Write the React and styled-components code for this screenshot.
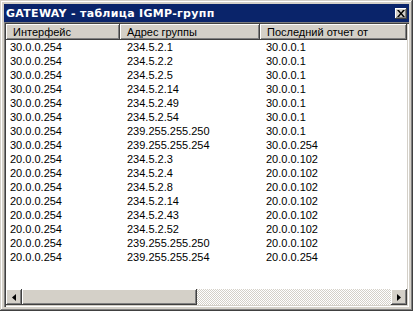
import styled, { createGlobalStyle } from "styled-components";

const GlobalStyle = createGlobalStyle`
  html, body {
    margin: 0;
    padding: 0;
    background: #d4d0c8;
  }
  * {
    box-sizing: border-box;
  }
`;

const raised = `
  box-shadow:
    inset -1px -1px #404040,
    inset 1px 1px #ffffff,
    inset -2px -2px #808080,
    inset 2px 2px #d4d0c8;
`;

const Window = styled.div`
  width: 413px;
  height: 311px;
  padding: 4px;
  background: #d4d0c8;
  display: flex;
  flex-direction: column;
  font-family: "Liberation Sans", Arial, sans-serif;
  font-size: 11px;
  box-shadow:
    inset -1px -1px #404040,
    inset 1px 1px #d4d0c8,
    inset -2px -2px #808080,
    inset 2px 2px #ffffff;
`;

const TitleBar = styled.div`
  height: 18px;
  flex-shrink: 0;
  background: #0a246a;
  color: #ffffff;
  display: flex;
  align-items: center;
  justify-content: space-between;
  padding: 0 2px 0 2px;
`;

const Title = styled.span`
  font-family: "DejaVu Sans", Verdana, sans-serif;
  font-weight: bold;
  font-size: 11px;
  letter-spacing: 0.3px;
  white-space: nowrap;
`;

const CloseButton = styled.div`
  width: 12px;
  height: 11px;
  background: #d4d0c8;
  display: flex;
  align-items: center;
  justify-content: center;
  ${raised}
`;

const Client = styled.div`
  flex: 1;
  display: flex;
  flex-direction: column;
  background: #ffffff;
  padding: 2px;
  box-shadow:
    inset 1px 1px #808080,
    inset 2px 2px #404040,
    inset -1px -1px #ffffff,
    inset -2px -2px #d4d0c8;
`;

const HeaderRow = styled.div`
  display: grid;
  grid-template-columns: 114px 140px 1fr;
  height: 16px;
  flex-shrink: 0;
`;

const HeaderCell = styled.div`
  background: #d4d0c8;
  color: #000000;
  display: flex;
  align-items: center;
  padding-left: 7px;
  white-space: nowrap;
  overflow: hidden;
  ${raised}
`;

const Body = styled.div`
  flex: 1;
  padding-top: 1px;
  overflow: hidden;
`;

const Row = styled.div`
  display: grid;
  grid-template-columns: 114px 140px 1fr;
  height: 14px;
  line-height: 13px;
  color: #000000;
`;

const Cell = styled.div`
  padding-left: ${(p) => p.$pad}px;
  white-space: nowrap;
`;

const ScrollBar = styled.div`
  height: 16px;
  flex-shrink: 0;
  display: flex;
  background: repeating-conic-gradient(#d4d0c8 0 25%, #ffffff 0 50%) 0 0 / 2px 2px;
`;

const ArrowButton = styled.div`
  width: 16px;
  height: 16px;
  background: #d4d0c8;
  display: flex;
  align-items: center;
  justify-content: center;
  ${raised}
`;

const Thumb = styled.div`
  width: 175px;
  height: 16px;
  background: #d4d0c8;
  ${raised}
`;

const Track = styled.div`
  flex: 1;
`;

const rows = [
  ["30.0.0.254", "234.5.2.1", "30.0.0.1"],
  ["30.0.0.254", "234.5.2.2", "30.0.0.1"],
  ["30.0.0.254", "234.5.2.5", "30.0.0.1"],
  ["30.0.0.254", "234.5.2.14", "30.0.0.1"],
  ["30.0.0.254", "234.5.2.49", "30.0.0.1"],
  ["30.0.0.254", "234.5.2.54", "30.0.0.1"],
  ["30.0.0.254", "239.255.255.250", "30.0.0.1"],
  ["30.0.0.254", "239.255.255.254", "30.0.0.254"],
  ["20.0.0.254", "234.5.2.3", "20.0.0.102"],
  ["20.0.0.254", "234.5.2.4", "20.0.0.102"],
  ["20.0.0.254", "234.5.2.8", "20.0.0.102"],
  ["20.0.0.254", "234.5.2.14", "20.0.0.102"],
  ["20.0.0.254", "234.5.2.43", "20.0.0.102"],
  ["20.0.0.254", "234.5.2.52", "20.0.0.102"],
  ["20.0.0.254", "239.255.255.250", "20.0.0.102"],
  ["20.0.0.254", "239.255.255.254", "20.0.0.254"],
];

export default function App() {
  return (
    <>
      <GlobalStyle />
      <Window>
        <TitleBar>
          <Title>GATEWAY - таблица IGMP-групп</Title>
          <CloseButton>
            <svg width="8" height="7" viewBox="0 0 8 7">
              <path d="M0 0h2l2 2.5L6 0h2L5 3.5 8 7H6L4 4.5 2 7H0l3-3.5z" fill="#000" />
            </svg>
          </CloseButton>
        </TitleBar>
        <Client>
          <HeaderRow>
            <HeaderCell>Интерфейс</HeaderCell>
            <HeaderCell>Адрес группы</HeaderCell>
            <HeaderCell>Последний отчет от</HeaderCell>
          </HeaderRow>
          <Body>
            {rows.map((r, i) => (
              <Row key={i}>
                <Cell $pad={4}>{r[0]}</Cell>
                <Cell $pad={7}>{r[1]}</Cell>
                <Cell $pad={6}>{r[2]}</Cell>
              </Row>
            ))}
          </Body>
          <ScrollBar>
            <ArrowButton>
              <svg width="4" height="7" viewBox="0 0 4 7">
                <path d="M4 0v7L0 3.5z" fill="#000" />
              </svg>
            </ArrowButton>
            <Thumb />
            <Track />
            <ArrowButton>
              <svg width="4" height="7" viewBox="0 0 4 7">
                <path d="M0 0v7l4-3.5z" fill="#000" />
              </svg>
            </ArrowButton>
          </ScrollBar>
        </Client>
      </Window>
    </>
  );
}
